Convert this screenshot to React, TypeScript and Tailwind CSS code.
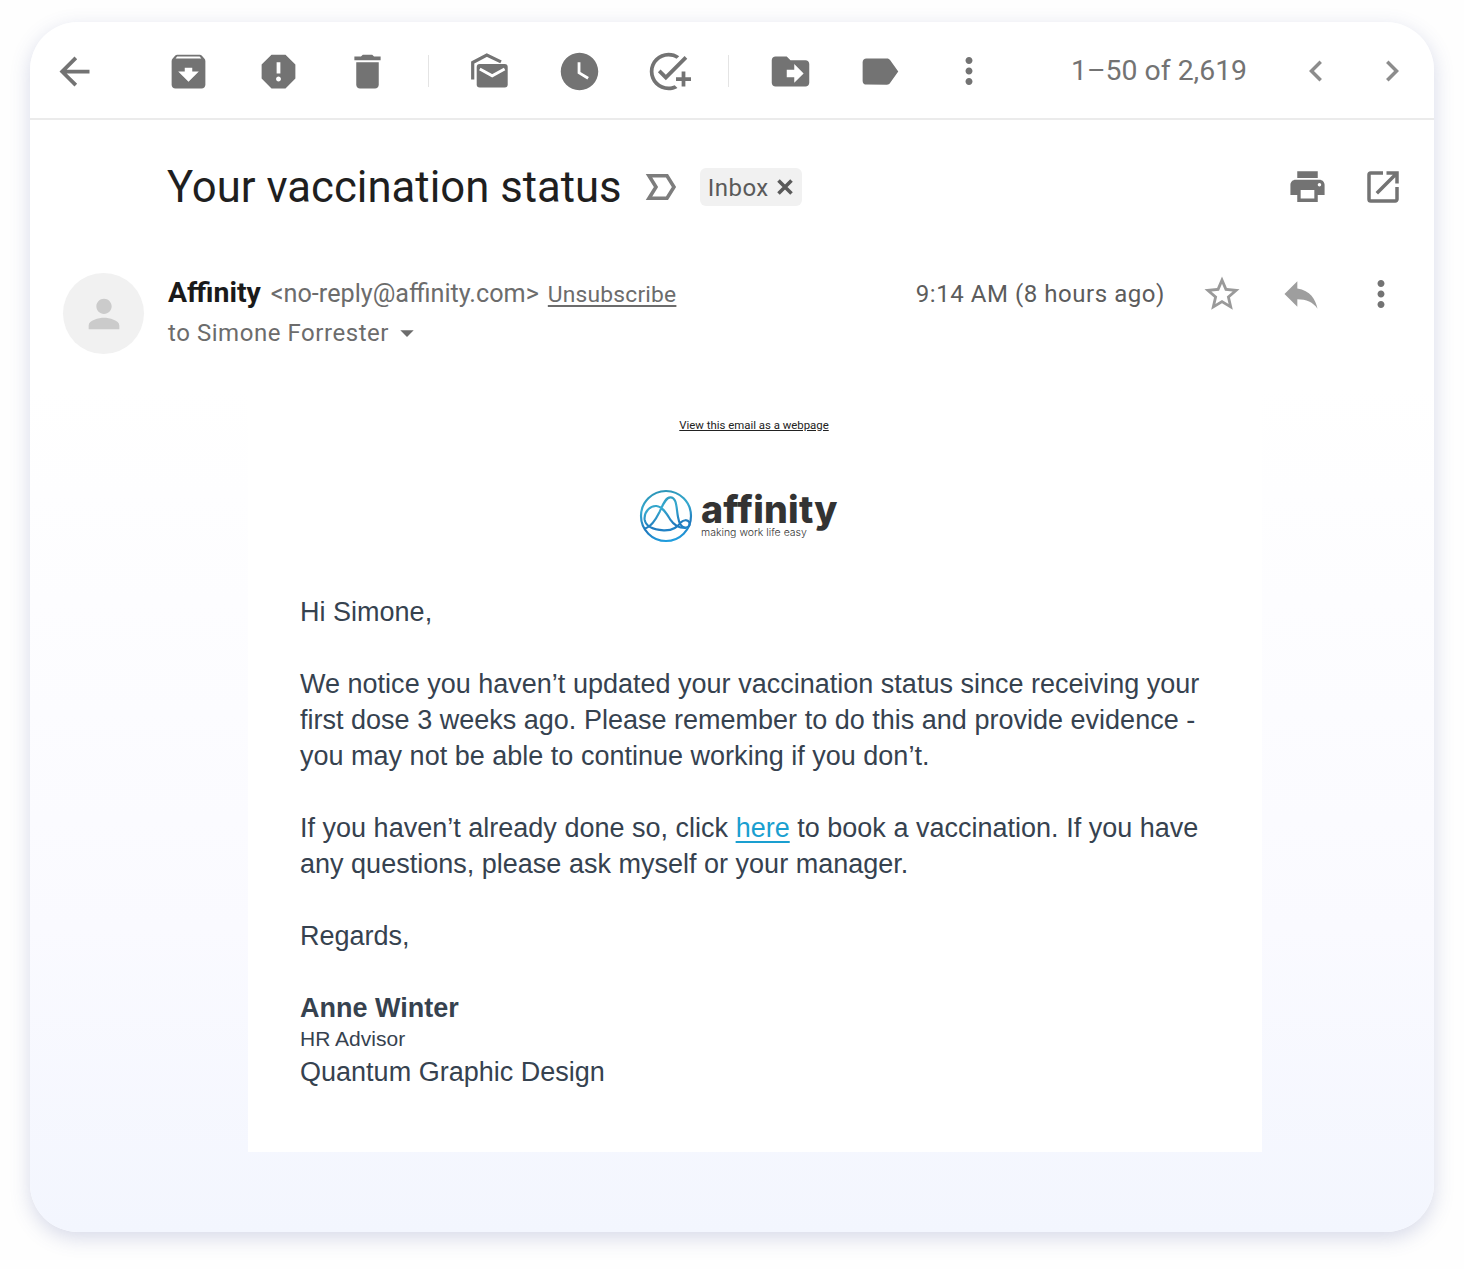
import type {ReactNode} from "react";
import {
    MdAddTask,
    MdArchive,
    MdArrowBack,
    MdArrowDropDown,
    MdChevronLeft,
    MdChevronRight,
    MdDelete,
    MdDriveFileMove,
    MdLabel,
    MdMoreVert,
    MdOpenInNew,
    MdPerson,
    MdPrint,
    MdReply,
    MdReport,
    MdStarBorder,
    MdWatchLater,
} from "react-icons/md";

function MarkUnreadIcon() {
    return (
        <svg width="45" height="45" viewBox="0 0 45 45" fill="none">
            <path d="M5.7 30.5V13.5L19.8 6L34 12.9" stroke="currentColor" strokeWidth="3.2"/>
            <rect x="9.7" y="15" width="31" height="23.4" rx="3" fill="currentColor"/>
            <path d="M12.8 20L25.2 26.8L37.6 20" stroke="white" strokeWidth="3"/>
        </svg>
    )
}

function ImportantIcon() {
    return (
        <svg width="32" height="28" viewBox="0 0 32 28" fill="none" stroke="#7d7d7d" strokeWidth="3.6">
            <path d="M4 2.8H22L29 14L22 25.2H4L11 14Z"/>
        </svg>
    )
}

function RemoveLabelIcon() {
    return (
        <svg width="16" height="16" viewBox="0 0 16 16" stroke="currentColor" strokeWidth="3.6" className="shrink-0">
            <path d="M1.5 1.5L14.5 14.5M14.5 1.5L1.5 14.5"/>
        </svg>
    )
}

function AffinityMark() {
    return (
        <svg width="54" height="54" viewBox="0 0 162 162" fill="none" stroke="url(#mark)" strokeWidth="6.5" strokeLinecap="round">
            <defs>
                <linearGradient id="mark" x1="60" y1="0" x2="90" y2="162" gradientUnits="userSpaceOnUse">
                    <stop offset="0" stopColor="#2a93b5"/>
                    <stop offset="0.35" stopColor="#36a9cf"/>
                    <stop offset="0.7" stopColor="#1f78bd"/>
                    <stop offset="1" stopColor="#22a3e2"/>
                </linearGradient>
            </defs>
            <circle cx="81" cy="81" r="75"/>
            <path d="M20 118C38 112 50 92 62 68C72 46 80 25 94 25C114 25 112 58 117 84C120 102 126 114 138 116C149 117 154 108 151 100C146 91 133 92 126 100C116 112 104 125 74 124C44 122 20 112 17 92C14 68 34 50 52 51C72 53 84 76 94 92C106 110 120 118 140 117"/>
        </svg>
    )
}

function Separator() {
    return <div className="h-8 w-px bg-[#e4e4e4]"/>
}

function Paragraph({children}: { children: ReactNode }) {
    return <p className="mb-9">{children}</p>
}

export default function App() {
    return (
        <div className="h-[1269px] w-[1464px] bg-[#fefefe] px-[30px] pt-[22px] font-[Roboto,sans-serif] text-[#737373]">
            <div className="h-[1210px] w-[1404px] overflow-hidden rounded-[48px] bg-linear-to-b from-white from-30% via-[#fafaff] via-75% to-[#f3f6fe] shadow-[0_6px_20px_rgba(75,85,155,0.22)]">
                <header className="flex h-[98px] items-center border-b-2 border-[#ebebeb] pt-[2px] pl-[22px]">
                    <MdArrowBack size={45}/>
                    <div className="ml-[69px] flex items-center gap-[44.5px]">
                        <MdArchive size={45}/>
                        <MdReport size={45}/>
                        <MdDelete size={45}/>
                    </div>
                    <div className="mr-[38px] ml-[38px]"><Separator/></div>
                    <div className="flex items-center gap-[44.5px]">
                        <MarkUnreadIcon/>
                        <MdWatchLater size={45}/>
                        <MdAddTask size={45}/>
                    </div>
                    <div className="mr-[39px] ml-[37px]"><Separator/></div>
                    <div className="flex items-center gap-[44px]">
                        <MdDriveFileMove size={45}/>
                        <MdLabel size={45}/>
                        <MdMoreVert size={42} className="ml-[2px]"/>
                    </div>
                    <span className="ml-[81px] text-[28.4px] whitespace-nowrap">1–50 of 2,619</span>
                    <div className="ml-auto flex gap-[34px] pr-[21px] text-[#8c8c8c]">
                        <MdChevronLeft size={42}/>
                        <MdChevronRight size={42}/>
                    </div>
                </header>

                <div className="flex h-[134px] items-center pr-[30px] pl-[137px]">
                    <h1 className="pt-[2px] text-[43.7px] whitespace-nowrap text-[#1f1f1f]">Your vaccination status</h1>
                    <div className="ml-[23px]"><ImportantIcon/></div>
                    <div className="ml-[23px] flex h-[38px] w-[102px] items-center rounded-md bg-[#f1f1f1] pt-[2px] pl-2 text-[24px] tracking-[0.5px] text-[#5a5a5a]">
                        Inbox
                        <div className="mb-[2px] ml-[8px]"><RemoveLabelIcon/></div>
                    </div>
                    <div className="ml-auto flex gap-[34px]">
                        <MdPrint size={41}/>
                        <MdOpenInNew size={42}/>
                    </div>
                </div>

                <div className="flex h-[140px] pt-[19px] pr-[32px] pl-[33px]">
                    <div className="flex size-[81px] shrink-0 items-center justify-center rounded-full bg-[#f1f1f1] text-[#cbcbcb]">
                        <MdPerson size={46}/>
                    </div>
                    <div className="ml-[24px] text-[24px] text-[#6c6c6c]">
                        <div className="mt-[-1px] flex h-[41px] items-baseline whitespace-nowrap">
                            <span className="text-[28.4px] font-bold text-[#1a1a1a]">Affinity</span>
                            <span className="ml-[10px] text-[25.2px]">&lt;no-reply@affinity.com&gt;</span>
                            <a className="ml-[9px] text-[22.8px] tracking-[0.2px] underline decoration-2 underline-offset-3">Unsubscribe</a>
                        </div>
                        <div className="flex h-10 items-center tracking-[0.55px]">
                            to Simone Forrester
                            <MdArrowDropDown size={32} className="ml-[2px]"/>
                        </div>
                    </div>
                    <div className="ml-auto flex h-[41px] items-center">
                        <span className="text-[24px] tracking-[0.55px] text-[#5c5c5c]">9:14 AM (8 hours ago)</span>
                        <MdStarBorder size={42} className="ml-[36px] text-[#9a9a9a]"/>
                        <MdReply size={44} className="ml-[36px] text-[#9e9e9e]"/>
                        <MdMoreVert size={42} className="ml-[37px]"/>
                    </div>
                </div>

                <main className="ml-[218px] h-[758px] w-[1014px] bg-white">
                    <div className="flex justify-center pt-[15px] pr-[2px]">
                        <a className="text-[11.4px] leading-[32px] text-[#222] underline">View this email as a webpage</a>
                    </div>
                    <div className="mt-[48px] flex h-[54px] pl-[391px]">
                        <AffinityMark/>
                        <div className="ml-2 font-[Inter,sans-serif] text-[#333]">
                            <div className="text-[37.5px] leading-[42px] font-extrabold tracking-[0.2px]">affinity</div>
                            <div className="mt-[-4px] text-[10.5px] leading-3 font-light">making work life easy</div>
                        </div>
                    </div>
                    <div className="pt-[51px] pl-[52px] font-['Liberation_Sans',sans-serif] text-[27px] leading-9 tracking-[0.01px] whitespace-nowrap text-[#36424f]">
                        <Paragraph>Hi Simone,</Paragraph>
                        <Paragraph>
                            We notice you haven’t updated your vaccination status since receiving your<br/>
                            first dose 3 weeks ago. Please remember to do this and provide evidence -<br/>
                            you may not be able to continue working if you don’t.
                        </Paragraph>
                        <Paragraph>
                            If you haven’t already done so, click <a className="text-[#1a9fd0] underline decoration-2 underline-offset-4">here</a> to book a vaccination. If you have<br/>
                            any questions, please ask myself or your manager.
                        </Paragraph>
                        <Paragraph>Regards,</Paragraph>
                        <p className="font-bold">Anne Winter</p>
                        <p className="text-[21px] leading-[25px]">HR Advisor</p>
                        <p className="mt-[3px]">Quantum Graphic Design</p>
                    </div>
                </main>
            </div>
        </div>
    )
}
